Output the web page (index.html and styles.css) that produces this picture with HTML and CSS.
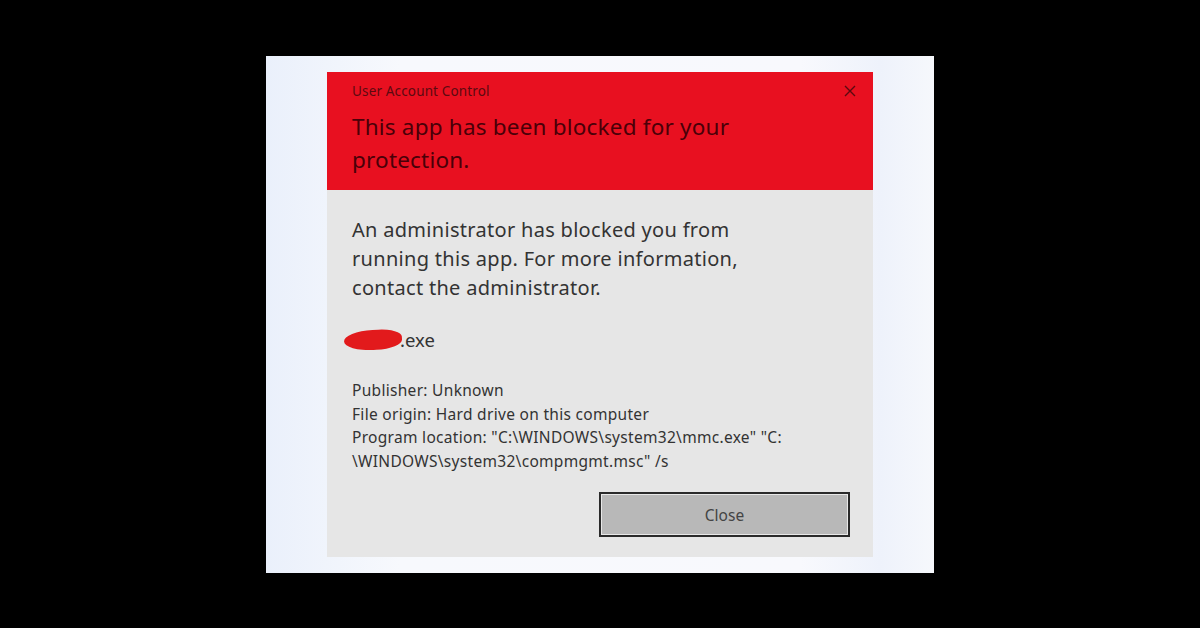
FILE: index.html
```html
<!DOCTYPE html>
<html>
<head>
<meta charset="utf-8">
<link rel="stylesheet" href="styles.css">
</head>
<body>
<div class="stage">
  <div class="panel">
    <div class="dialog">
      <div class="header">
        <div class="caption-row">
          <span class="caption">User Account Control</span>
          <svg class="x" width="12" height="12" viewBox="0 0 12 12"><path d="M1 1L11 11M11 1L1 11" stroke="#5a0a10" stroke-width="1.4" fill="none"/></svg>
        </div>
        <div class="title">This app has been blocked for your protection.</div>
      </div>
      <div class="body">
        <p class="msg">An administrator has blocked you from running this app. For more information, contact the administrator.</p>
        <div class="file"><span class="blob"></span><span class="ext">.exe</span></div>
        <div class="details">
          <div>Publisher: Unknown</div>
          <div>File origin: Hard drive on this computer</div>
          <div>Program location: "C:\WINDOWS\system32\mmc.exe" "C:<br>\WINDOWS\system32\compmgmt.msc" /s</div>
        </div>
        <div class="actions"><button class="btn">Close</button></div>
      </div>
    </div>
  </div>
</div>
</body>
</html>
```
FILE: styles.css
```css
html, body { margin: 0; padding: 0; }
body {
  background: #000;
  width: 1200px;
  height: 628px;
  font-family: "Noto Sans", "Open Sans", sans-serif;
}
.stage {
  height: 628px;
  display: flex;
  align-items: center;
  justify-content: center;
}
.panel {
  width: 668px;
  height: 517px;
  margin-top: 1px;
  background: linear-gradient(90deg, #eaf0fb 0%, #f7f9fd 20%, #f8f9fd 80%, #eef2fb 92%, #f6f8fc 100%);
  display: flex;
  justify-content: center;
  padding-top: 16px;
  box-sizing: border-box;
}
.dialog {
  width: 546px;
  height: 485px;
  display: flex;
  flex-direction: column;
  background: #e6e6e6;
}
.header {
  background: #e81020;
  height: 118px;
  box-sizing: border-box;
  padding: 10px 17px 0 25px;
}
.caption-row {
  display: flex;
  justify-content: space-between;
  align-items: center;
  height: 17px;
}
.caption {
  font-size: 13.5px;
  letter-spacing: 0.15px;
  color: #5c0a10;
}
.x { margin-top: 1px; }
.title {
  margin-top: 11px;
  font-size: 22.5px;
  letter-spacing: 0.2px;
  line-height: 33px;
  color: #4a0008;
  width: 440px;
}
.body {
  padding: 25px 23px 0 25px;
  flex: 1;
  display: flex;
  flex-direction: column;
}
.msg {
  margin: 0;
  font-size: 20px;
  letter-spacing: 0.3px;
  line-height: 29px;
  color: #333;
  width: 420px;
}
.file {
  margin-top: 23px;
  display: flex;
  align-items: center;
  height: 29px;
  margin-left: -8px;
}
.blob {
  width: 58px;
  height: 20px;
  background: #e21a1c;
  border-radius: 50% 40% 45% 50%;
  transform: rotate(-3deg);
}
.ext {
  font-size: 18.5px;
  color: #333;
  margin-left: -2px;
}
.details {
  margin-top: 25px;
  font-size: 15.5px;
  letter-spacing: 0.3px;
  line-height: 23.5px;
  color: #333;
}
.actions {
  margin-top: 19px;
  display: flex;
  justify-content: flex-end;
}
.btn {
  width: 251px;
  height: 45px;
  background: #b8b8b8;
  border: 2px solid #2a2a2a;
  box-shadow: inset 0 0 0 1px #e8e8e8;
  font-family: inherit;
  font-size: 15.5px;
  color: #444;
  padding: 0;
}
```
